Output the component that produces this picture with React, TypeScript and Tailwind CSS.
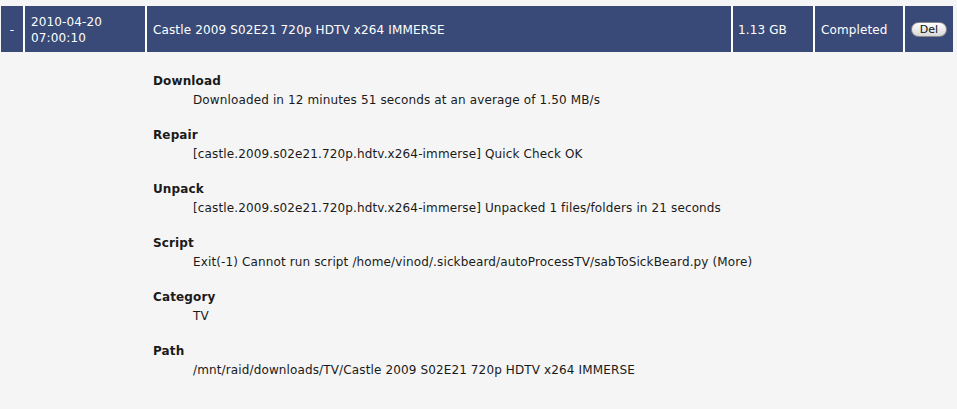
import React from "react";

const details: [string, string][] = [
  ["Download", "Downloaded in 12 minutes 51 seconds at an average of 1.50 MB/s"],
  ["Repair", "[castle.2009.s02e21.720p.hdtv.x264-immerse] Quick Check OK"],
  ["Unpack", "[castle.2009.s02e21.720p.hdtv.x264-immerse] Unpacked 1 files/folders in 21 seconds"],
  ["Script", "Exit(-1) Cannot run script /home/vinod/.sickbeard/autoProcessTV/sabToSickBeard.py (More)"],
  ["Category", "TV"],
  ["Path", "/mnt/raid/downloads/TV/Castle 2009 S02E21 720p HDTV x264 IMMERSE"],
];

export default function App() {
  return (
    <div
      className="w-[957px] h-[409px] bg-[#f5f5f5] text-[12px] tracking-[0.13px] text-[#1a1a1a] overflow-hidden"
      style={{ fontFamily: '"DejaVu Sans", Verdana, sans-serif' }}
    >
      <div className="pt-[6px] pl-[1px]">
        <div className="flex w-[952px] h-[46px] gap-[2px] bg-white text-white">
          <div className="w-[22px] bg-[#394a78] flex items-center justify-center pt-[2px]">-</div>
          <div className="w-[120px] bg-[#394a78] flex flex-col justify-center pl-[6px] leading-[16px] pt-[1px]">
            <span>2010-04-20</span>
            <span>07:00:10</span>
          </div>
          <div className="w-[584px] bg-[#394a78] flex items-center pl-[6px] pt-[2px]">
            Castle 2009 S02E21 720p HDTV x264 IMMERSE
          </div>
          <div className="w-[80px] bg-[#394a78] flex items-center pl-[5px] pt-[2px]">1.13 GB</div>
          <div className="w-[88px] bg-[#394a78] flex items-center pl-[6px] pt-[2px]">Completed</div>
          <div className="w-[48px] bg-[#394a78] flex items-center pl-[6px]">
            <button className="w-[36px] h-[15px] rounded-full bg-gradient-to-b from-white to-[#d8d8d8] border border-[#8a8a8a] text-[#111] text-[11px] tracking-normal leading-[13px] flex items-center justify-center">
              Del
            </button>
          </div>
        </div>
      </div>
      <div className="pl-[153px] mt-[20px] flex flex-col gap-[16px]">
        {details.map(([label, value]) => (
          <div key={label} className="flex flex-col leading-[19px]">
            <span className="font-bold">{label}</span>
            <span className="pl-[40px]">{value}</span>
          </div>
        ))}
      </div>
    </div>
  );
}
